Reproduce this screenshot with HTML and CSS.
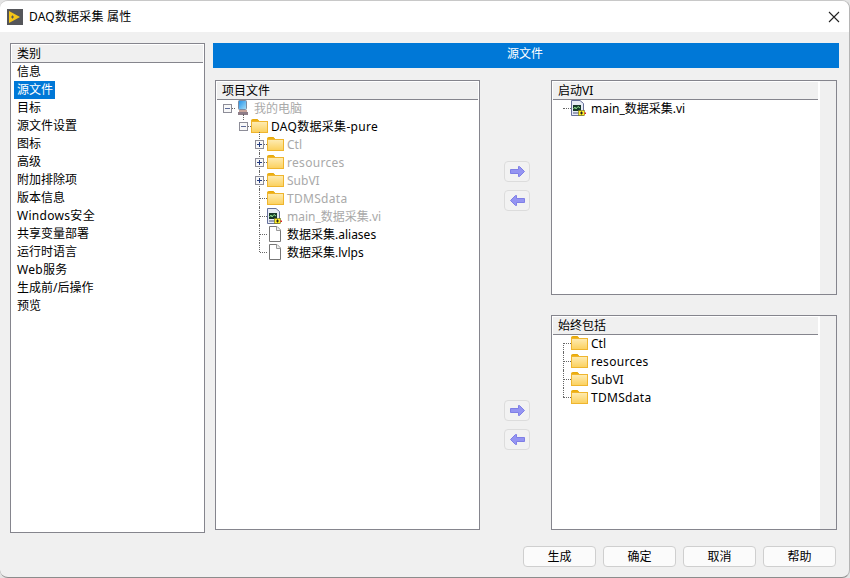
FILE: index.html
```html
<!DOCTYPE html>
<html lang="zh-CN">
<head>
  <meta charset="UTF-8">
  <title>DAQ数据采集 属性</title>
  <link rel="stylesheet" href="styles.css">
</head>
<body>
  <svg class="defs" width="0" height="0">
    <defs>
      <linearGradient id="folderFill" x1="0" y1="0" x2="0" y2="1">
        <stop offset="0" stop-color="#feecb4"/>
        <stop offset="1" stop-color="#fbd05c"/>
      </linearGradient>
      <linearGradient id="screenFill" x1="0" y1="0" x2="1" y2="1">
        <stop offset="0" stop-color="#1f8fe8"/>
        <stop offset="1" stop-color="#a8e0f8"/>
      </linearGradient>
      <symbol id="folder" viewBox="0 0 17 14">
        <path d="M0.500 2.500V1.500Q0.500 0.500 1.500 0.500H6Q7 0.500 7.500 1.500L8 2.500H0.500Z" fill="#eeb00f" stroke="#e6a80c"/>
        <rect x="0.500" y="2.500" width="16" height="11" fill="url(#folderFill)" stroke="#efb52e"/>
      </symbol>
      <symbol id="page" viewBox="0 0 12 16">
        <path d="M0.500 0.500H8L11.500 4V15.500H0.500Z" fill="#fff" stroke="#777"/>
        <path d="M7.500 0.500V4.500H11.500" fill="#eee" stroke="#999"/>
      </symbol>
      <symbol id="vi" viewBox="0 0 15 16">
        <path d="M0.500 0.500H9L12.500 3.500V15.500H0.500Z" fill="#e7ecf6" stroke="#66709a"/>
        <rect x="2" y="5" width="8" height="6" fill="#17392a"/>
        <path d="M2.500 9L4 7L5 9L7 6.500L9 8" fill="none" stroke="#8fe08f"/>
        <rect x="2" y="12" width="6" height="2" fill="#9aa0b8"/>
        <rect x="7.500" y="10.500" width="6" height="5" fill="#ffee22" stroke="#6a6a20" stroke-width="0.600"/>
        <path d="M10.500 11.500V14.500M9 13H12" stroke="#222"/>
        <rect x="13.500" y="12.500" width="1.500" height="1.500" fill="#e02020"/>
      </symbol>
      <symbol id="arrow" viewBox="0 0 15 11">
        <path d="M0.500 3.500H8.500V0.500H9.500L14.500 5.500L9.500 10.500H8.500V7.500H0.500Z" fill="#9494f2" stroke="#7f7fe6"/>
      </symbol>
    </defs>
  </svg>

  <div class="window">
    <header class="titlebar">
      <svg class="app-icon" width="16" height="16" viewBox="0 0 16 16">
        <rect width="16" height="16" fill="#55565a"/>
        <path d="M2 2L13 8L2 14Z" fill="#f5c518"/>
        <path d="M4 8H7M5.500 6.500V9.500" stroke="#55565a"/>
      </svg>
      <span class="title">DAQ数据采集 属性</span>
      <svg class="close" width="12" height="12" viewBox="0 0 12 12">
        <path d="M1 1L11 11M11 1L1 11" stroke="#222" stroke-width="1.100"/>
      </svg>
    </header>

    <div class="content">
      <aside class="panel categories">
        <div class="panel-head">类别</div>
        <ul class="cat-list">
          <li>信息</li>
          <li><span class="selected">源文件</span></li>
          <li>目标</li>
          <li>源文件设置</li>
          <li>图标</li>
          <li>高级</li>
          <li>附加排除项</li>
          <li>版本信息</li>
          <li class="wide">Windows安全</li>
          <li>共享变量部署</li>
          <li>运行时语言</li>
          <li class="wide">Web服务</li>
          <li>生成前/后操作</li>
          <li>预览</li>
        </ul>
      </aside>

      <main class="main">
        <div class="banner">源文件</div>
        <div class="columns">
          <section class="panel project">
            <div class="panel-head">项目文件</div>
            <ul class="tree">
              <li class="row dim lvl0">
                <span class="box minus"></span>
                <svg class="ico" width="16" height="16" viewBox="0 0 16 16">
                  <rect x="3.500" y="0.500" width="8" height="9" rx="1" fill="url(#screenFill)" stroke="#7d8aa0"/>
                  <rect x="4" y="10" width="8" height="2" fill="#c8a49a"/>
                  <rect x="3" y="12" width="10" height="3" fill="#8d7d88"/>
                </svg>
                <span class="lbl">我的电脑</span>
              </li>
              <li class="row lvl1">
                <span class="box minus"></span>
                <svg class="ico" width="17" height="14"><use href="#folder"/></svg>
                <span class="lbl wide">DAQ数据采集-pure</span>
              </li>
              <li class="row dim lvl2">
                <span class="box plus"></span>
                <svg class="ico" width="17" height="14"><use href="#folder"/></svg>
                <span class="lbl">Ctl</span>
              </li>
              <li class="row dim lvl2">
                <span class="box plus"></span>
                <svg class="ico" width="17" height="14"><use href="#folder"/></svg>
                <span class="lbl wide">resources</span>
              </li>
              <li class="row dim lvl2">
                <span class="box plus"></span>
                <svg class="ico" width="17" height="14"><use href="#folder"/></svg>
                <span class="lbl">SubVI</span>
              </li>
              <li class="row dim lvl2">
                <span class="link"></span>
                <svg class="ico" width="17" height="14"><use href="#folder"/></svg>
                <span class="lbl wide">TDMSdata</span>
              </li>
              <li class="row dim lvl2">
                <span class="link"></span>
                <svg class="ico ico-vi" width="15" height="16"><use href="#vi"/></svg>
                <span class="lbl">main_数据采集.vi</span>
              </li>
              <li class="row lvl2">
                <span class="link"></span>
                <svg class="ico ico-page" width="12" height="16"><use href="#page"/></svg>
                <span class="lbl">数据采集.aliases</span>
              </li>
              <li class="row lvl2">
                <span class="link"></span>
                <svg class="ico ico-page" width="12" height="16"><use href="#page"/></svg>
                <span class="lbl">数据采集.lvlps</span>
              </li>
            </ul>
          </section>

          <div class="movers">
            <div class="mover-set">
              <button class="arrow-btn"><svg width="15" height="11"><use href="#arrow"/></svg></button>
              <button class="arrow-btn"><svg class="flip" width="15" height="11"><use href="#arrow"/></svg></button>
            </div>
            <div class="mover-set">
              <button class="arrow-btn"><svg width="15" height="11"><use href="#arrow"/></svg></button>
              <button class="arrow-btn"><svg class="flip" width="15" height="11"><use href="#arrow"/></svg></button>
            </div>
          </div>

          <div class="side">
            <section class="panel picked">
              <div class="panel-head">启动VI</div>
              <ul class="tree flat single">
                <li class="row">
                  <span class="link"></span>
                  <svg class="ico ico-vi" width="15" height="16"><use href="#vi"/></svg>
                  <span class="lbl">main_数据采集.vi</span>
                </li>
              </ul>
              <div class="gutter"></div>
            </section>
            <section class="panel picked">
              <div class="panel-head">始终包括</div>
              <ul class="tree flat">
                <li class="row"><span class="link"></span><svg class="ico" width="17" height="14"><use href="#folder"/></svg><span class="lbl">Ctl</span></li>
                <li class="row"><span class="link"></span><svg class="ico" width="17" height="14"><use href="#folder"/></svg><span class="lbl wide">resources</span></li>
                <li class="row"><span class="link"></span><svg class="ico" width="17" height="14"><use href="#folder"/></svg><span class="lbl">SubVI</span></li>
                <li class="row"><span class="link"></span><svg class="ico" width="17" height="14"><use href="#folder"/></svg><span class="lbl wide">TDMSdata</span></li>
              </ul>
              <div class="gutter"></div>
            </section>
          </div>
        </div>
      </main>
    </div>

    <footer class="actions">
      <button class="btn">生成</button>
      <button class="btn">确定</button>
      <button class="btn">取消</button>
      <button class="btn">帮助</button>
    </footer>
  </div>
</body>
</html>
```

FILE: styles.css
```css
html, body {
  margin: 0;
  height: 100%;
  background: #e4e4e4;
  overflow: hidden;
}
body {
  font-family: "Noto Sans", "Noto Sans CJK SC", sans-serif;
  font-size: 12px;
  color: #000;
}
ul {
  list-style: none;
  margin: 0;
  padding: 0;
}
.defs {
  position: absolute;
}
.wide {
  letter-spacing: 0.3px;
}
.window {
  width: 849px;
  height: 576px;
  background: #f0f0f0;
  border-radius: 8px;
  border-top: 1px solid #c8c8c8;
  border-right: 1px solid #b5b5b5;
  border-bottom: 1px solid #8c8c8c;
  overflow: hidden;
  display: flex;
  flex-direction: column;
}
.titlebar {
  height: 31px;
  flex: none;
  background: #fff;
  display: flex;
  align-items: center;
  padding: 0 9px 0 7px;
}
.title {
  margin: 0 0 2px 6px;
  letter-spacing: 0.2px;
}
.close {
  margin-left: auto;
}
.content {
  height: 490px;
  flex: none;
  margin-top: 11px;
  padding-left: 10px;
  display: flex;
  gap: 8px;
}
.panel {
  box-sizing: border-box;
  background: #fff;
  border: 1px solid #85858d;
  position: relative;
}
.panel-head {
  height: 17px;
  line-height: 17px;
  margin: 1px 1px 0;
  padding-left: 5px;
  background: #f0f0f0;
  border-bottom: 1px solid #85858d;
}
.categories {
  width: 195px;
  height: 490px;
}
.cat-list {
  padding-left: 6px;
}
.cat-list li {
  height: 18px;
  line-height: 18px;
}
.selected {
  display: block;
  width: fit-content;
  height: 18px;
  background: #0078d7;
  color: #fff;
  padding: 0 2px 0 3px;
  margin-left: -3px;
}
.main {
  width: 626px;
}
.banner {
  height: 25px;
  line-height: 22px;
  padding-right: 2px;
  background: #0078d7;
  color: #fff;
  text-align: center;
}
.columns {
  display: flex;
  margin: 12px 0 0 2px;
}
.project {
  width: 265px;
  height: 450px;
}
.movers {
  width: 68px;
  flex: none;
  padding: 81px 0 0 3px;
}
.mover-set {
  height: 239px;
  display: flex;
  flex-direction: column;
  align-items: center;
  gap: 8px;
}
.arrow-btn {
  width: 26px;
  height: 21px;
  padding: 0;
  background: #f2f2f2;
  border: 1px solid #dcdcdc;
  border-radius: 4px;
  display: flex;
  align-items: center;
  justify-content: center;
}
.flip {
  transform: scaleX(-1);
}
.side {
  width: 286px;
  display: flex;
  flex-direction: column;
  gap: 20px;
}
.picked {
  height: 215px;
}
.picked .panel-head {
  margin-right: 18px;
}
.gutter {
  position: absolute;
  top: 0;
  right: 0;
  bottom: 0;
  width: 16px;
  background: #f0f0f0;
  border-left: 1px solid #fff;
}
.tree {
  margin-top: -1px;
}
.row {
  height: 18px;
  display: flex;
  align-items: center;
  position: relative;
  line-height: 16px;
  white-space: nowrap;
}
.lvl0 { padding-left: 7px; }
.lvl1 { padding-left: 23px; }
.lvl2 { padding-left: 39px; }

/* tree connectors */
.lvl1::before {
  content: "";
  position: absolute;
  left: 27px;
  top: -3px;
  height: 6px;
  border-left: 1px dotted #666;
}
.lvl2::before {
  content: "";
  position: absolute;
  left: 43px;
  top: 0;
  height: 18px;
  border-left: 1px dotted #666;
}
.lvl2:nth-child(3)::before {
  top: -3px;
  height: 21px;
}
.lvl2:last-child::before {
  height: 9px;
}
.flat .row {
  padding-left: 11px;
}
.flat .row::before {
  content: "";
  position: absolute;
  left: 11px;
  top: 0;
  height: 18px;
  border-left: 1px dotted #666;
}
.flat .row:first-child::before {
  top: 9px;
  height: 9px;
}
.flat .row:last-child::before {
  height: 9px;
}
.flat.single .row::before {
  display: none;
}

.box {
  position: relative;
  z-index: 1;
  width: 9px;
  height: 9px;
  box-sizing: border-box;
  margin-right: 3px;
  flex: none;
  border: 1px solid #8d8d98;
  background-color: #f8f8f8;
  background-repeat: no-repeat;
}
.box::after {
  content: "";
  position: absolute;
  left: 8px;
  top: 3px;
  width: 3px;
  border-top: 1px dotted #666;
}
.box.minus {
  background-image: linear-gradient(#5c6a98, #5c6a98);
  background-size: 5px 1px;
  background-position: 1px 3px;
}
.box.plus {
  background-image: linear-gradient(#223a80, #223a80), linear-gradient(#223a80, #223a80);
  background-size: 5px 1px, 1px 5px;
  background-position: 1px 3px, 3px 1px;
}
.link {
  width: 7px;
  height: 0;
  margin-left: 5px;
  flex: none;
  border-top: 1px dotted #666;
}
.flat .link {
  margin-left: 0;
  width: 8px;
}
.ico {
  flex: none;
}
.ico-vi {
  margin-right: 2px;
}
.ico-page {
  margin: 0 3px 0 2px;
}
.lbl {
  margin-left: 3px;
  padding-top: 2px;
}
.dim .lbl {
  color: #a9a9a9;
}
.actions {
  display: flex;
  justify-content: flex-end;
  gap: 7px;
  padding: 13px 13px 0 0;
}
.btn {
  width: 73px;
  height: 21px;
  padding: 0;
  background: #fbfbfb;
  border: 1px solid #cfcfcf;
  border-radius: 4px;
  font: inherit;
  line-height: 17px;
  color: #000;
}
```
